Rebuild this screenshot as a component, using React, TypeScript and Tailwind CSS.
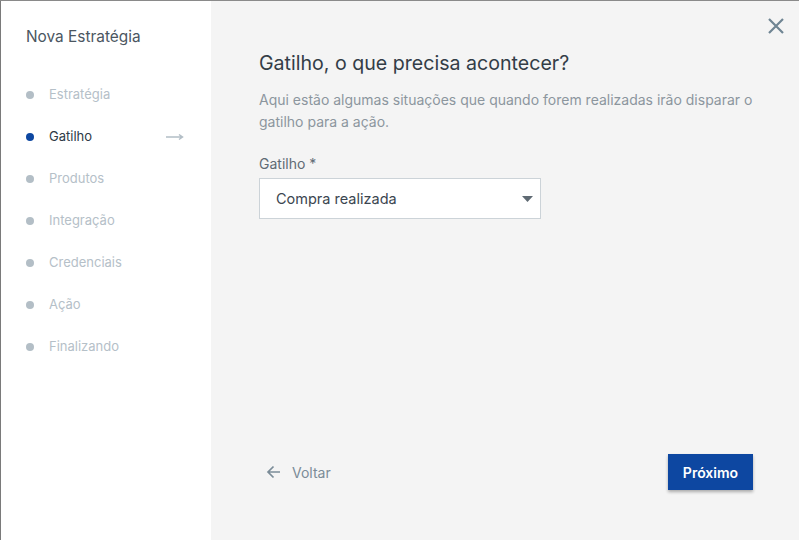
import React from "react";

const steps = ["Estratégia", "Gatilho", "Produtos", "Integração", "Credenciais", "Ação", "Finalizando"];

export default function App() {
  return (
    <div className="w-[799px] h-[540px] flex flex-col overflow-hidden bg-[#f4f4f4]" style={{ fontFamily: "Inter, 'Noto Sans', sans-serif" }}>
      <div className="h-px w-full bg-[#8a8a8a] shrink-0" />
      <div className="flex flex-1 min-h-0">
        <div className="w-px bg-[#7a7a7a] shrink-0" />
        <aside className="w-[210px] bg-white shrink-0 pl-[25px] pt-[27px]">
          <div className="text-[15.4px] text-[#4b5661] leading-[18px]">Nova Estratégia</div>
          <ul className="mt-[40px] flex flex-col gap-[24px]">
            {steps.map((s, i) => {
              const active = i === 1;
              return (
                <li key={s} className="flex items-center h-[18px] text-[13px]">
                  <span className={`w-[8px] h-[8px] rounded-full ml-[0px] ${active ? "bg-[#0d47a1]" : "bg-[#b3bec6]"}`} />
                  <span className={`ml-[15px] ${active ? "text-[#2e3a46]" : "text-[#b5c0c8]"}`}>{s}</span>
                  {active && (
                    <svg className="ml-auto mr-[27px]" width="18" height="8" viewBox="0 0 18 8">
                      <path d="M0 4 H16 M13 1.5 L16.5 4 L13 6.5" stroke="#b3bec6" strokeWidth="1.5" fill="none" />
                    </svg>
                  )}
                </li>
              );
            })}
          </ul>
        </aside>
        <main className="flex-1 min-w-0 relative flex flex-col pl-[48px] pr-[46px] pt-[48px] pb-[50px]">
          <button className="absolute top-[15px] right-[13px] w-[20px] h-[20px] flex items-center justify-center">
            <svg width="18" height="18" viewBox="0 0 18 18">
              <path d="M2 2 L16 16 M16 2 L2 16" stroke="#6f8593" strokeWidth="2.2" />
            </svg>
          </button>
          <h1 className="text-[19.6px] leading-[28px] text-[#333d47]">Gatilho, o que precisa acontecer?</h1>
          <p className="mt-[12px] text-[14px] leading-[22px] text-[#8c969e] w-[500px] max-w-none">
            Aqui estão algumas situações que quando forem realizadas irão disparar o gatilho para a ação.
          </p>
          <label className="mt-[22px] text-[14px] leading-[18px] text-[#606b74]">Gatilho *</label>
          <div className="mt-[5px] w-[282px] h-[41px] bg-white border border-[#ccd3d8] flex items-center pl-[16px] pr-[7px]">
            <span className="text-[14.5px] text-[#3b4650]">Compra realizada</span>
            <svg className="ml-auto" width="11" height="6" viewBox="0 0 11 6">
              <path d="M0 0 H11 L5.5 6 Z" fill="#5f6a73" />
            </svg>
          </div>
          <div className="mt-auto flex items-center justify-between">
            <button className="flex items-center ml-[7px] text-[14px] text-[#7b8c98]">
              <svg width="15" height="14" viewBox="0 0 15 14">
                <path d="M14 7 H2 M7.5 1.5 L2 7 L7.5 12.5" stroke="#7b8c98" strokeWidth="1.7" fill="none" />
              </svg>
              <span className="ml-[11px]">Voltar</span>
            </button>
            <button className="w-[85px] h-[36px] bg-[#0d47a1] text-white text-[14px] font-semibold shadow-[0_2px_3px_rgba(0,0,0,0.3)]">
              Próximo
            </button>
          </div>
        </main>
      </div>
    </div>
  );
}
